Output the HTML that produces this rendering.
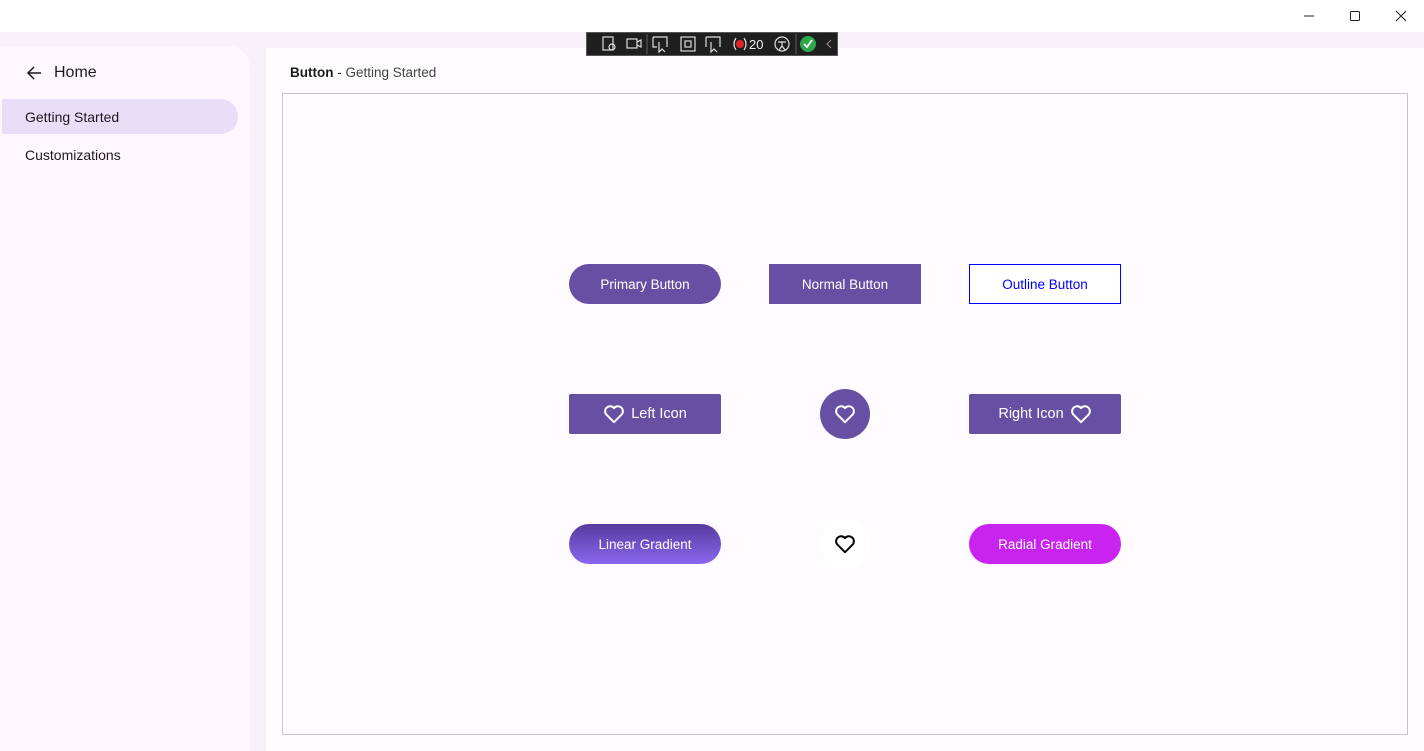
<!DOCTYPE html>
<html><head><meta charset="utf-8"><style>
*{margin:0;padding:0;box-sizing:border-box}
body{width:1424px;height:751px;background:#f7f2fa;font-family:"Liberation Sans",sans-serif;position:relative;overflow:hidden}
.title{position:absolute;left:0;top:0;width:1424px;height:32px;background:#fff}
.side{position:absolute;left:0;top:46px;width:250px;height:705px;background:#fef7fd;border-top-right-radius:22px}
.main{position:absolute;left:266px;top:48px;width:1158px;height:703px;background:#fffbfe}
.box{position:absolute;left:282px;top:93px;width:1126px;height:642px;border:1px solid #c8c3cc;background:#fffbfe}
.t{position:absolute;white-space:nowrap}
.btn{position:absolute;width:152px;height:40px;display:flex;align-items:center;justify-content:center;color:#fff;font-size:13.5px;background:#6750a4}
.tb{position:absolute;left:586px;top:32px;width:252px;height:24px;background:#1f1f1f;border:1px solid #555;overflow:hidden;z-index:10}
</style></head><body>
<div class="title"></div>
<svg style="position:absolute;left:1300px;top:8px" width="110" height="16">
<line x1="4" y1="8" x2="14" y2="8" stroke="#222" stroke-width="1"/>
<rect x="50.5" y="3.5" width="9" height="9" rx="1" fill="none" stroke="#222"/>
<path d="M96 3 L106 13 M106 3 L96 13" stroke="#222" stroke-width="1"/>
</svg>
<div class="side"></div>
<svg style="position:absolute;left:26px;top:65px" width="16" height="16"><path d="M15 8 H2 M8 2 L2 8 L8 14" stroke="#1c1b1f" stroke-width="1.5" fill="none"/></svg>
<div class="t" style="left:54px;top:64px;font-size:16px;color:#1c1b1f">Home</div>
<div style="position:absolute;left:2px;top:99px;width:236px;height:35px;background:#e8def8;border-radius:0 18px 18px 0"></div>
<div class="t" style="left:25px;top:109px;font-size:14px;color:#1c1b1f">Getting Started</div>
<div class="t" style="left:25px;top:147px;font-size:14px;color:#1c1b1f">Customizations</div>
<div class="main"></div>
<div class="t" style="left:290px;top:65px;font-size:13.5px;color:#1c1b1f"><b style="font-weight:bold">Button</b> - <span style="color:#444">Getting Started</span></div>
<div class="box"></div>
<div class="btn" style="left:569px;top:264px;border-radius:20px">Primary Button</div>
<div class="btn" style="left:769px;top:264px">Normal Button</div>
<div class="btn" style="left:969px;top:264px;background:#fff;border:1px solid #0000ff;color:#0000ff">Outline Button</div>
<div class="btn" style="left:569px;top:394px;font-size:14.5px;border-radius:2px"><svg width="22" height="20" style="margin-right:6px" viewBox="0 0 24 22"><path d="M12 20 L3.5 11.5 A5 5 0 0 1 12 4.5 A5 5 0 0 1 20.5 11.5 Z" fill="none" stroke="#fff" stroke-width="2.2" stroke-linejoin="round"/></svg>Left Icon</div>
<div class="btn" style="left:820px;top:389px;width:50px;height:50px;border-radius:50%"><svg width="22" height="20" viewBox="0 0 24 22"><path d="M12 20 L3.5 11.5 A5 5 0 0 1 12 4.5 A5 5 0 0 1 20.5 11.5 Z" fill="none" stroke="#fff" stroke-width="2.2" stroke-linejoin="round"/></svg></div>
<div class="btn" style="left:969px;top:394px;font-size:14.5px;border-radius:2px">Right Icon<svg width="22" height="20" style="margin-left:6px" viewBox="0 0 24 22"><path d="M12 20 L3.5 11.5 A5 5 0 0 1 12 4.5 A5 5 0 0 1 20.5 11.5 Z" fill="none" stroke="#fff" stroke-width="2.2" stroke-linejoin="round"/></svg></div>
<div class="btn" style="left:569px;top:524px;border-radius:20px;background:linear-gradient(#573b9e,#8a66f0)">Linear Gradient</div>
<div class="btn" style="left:820px;top:519px;width:50px;height:50px;border-radius:50%;background:#fff"><svg width="22" height="20" viewBox="0 0 24 22"><path d="M12 20 L3.5 11.5 A5 5 0 0 1 12 4.5 A5 5 0 0 1 20.5 11.5 Z" fill="none" stroke="#000" stroke-width="2.2" stroke-linejoin="round"/></svg></div>
<div class="btn" style="left:969px;top:524px;border-radius:20px;background:#c923f0">Radial Gradient</div>
<div class="tb">
<svg width="250" height="22" style="display:block">
<g stroke="#ddd" fill="none" stroke-width="1.2">
<rect x="16" y="4" width="10" height="13"/><circle cx="25" cy="14" r="3"/>
<rect x="40" y="6" width="10" height="9"/><path d="M50 9 L54 7 V14 L50 12"/>
<path d="M66 4 H80 V14 M66 4 V14 H70"/><path d="M72 9 L72 19 L75 16 L78 19"/>
<rect x="94" y="4" width="14" height="14"/><rect x="98" y="8" width="6" height="6"/>
<path d="M119 4 H133 V14 M119 4 V14"/><path d="M124 9 L124 19 L127 16 L130 19"/>
<path d="M149 5 Q145 11 149 17 M157 5 Q161 11 157 17"/>
<circle cx="195" cy="11" r="7"/><path d="M191 9 H199 M195 9 V13 L192 17 M195 13 L198 17"/>
<line x1="60" y1="1" x2="60" y2="21" stroke="#555"/>
<line x1="209" y1="1" x2="209" y2="21" stroke="#555"/>
<path d="M244 7 L240 11 L244 15" stroke="#888"/>
</g>
<circle cx="153" cy="11" r="4" fill="#e0242a"/>
<text x="162" y="16" fill="#eee" font-size="13" font-family="Liberation Sans">20</text>
<circle cx="221" cy="11" r="8" fill="#2aa84a"/><path d="M217 11 L220 14 L225 7" stroke="#fff" stroke-width="1.8" fill="none"/>
</svg></div>
</body></html>
